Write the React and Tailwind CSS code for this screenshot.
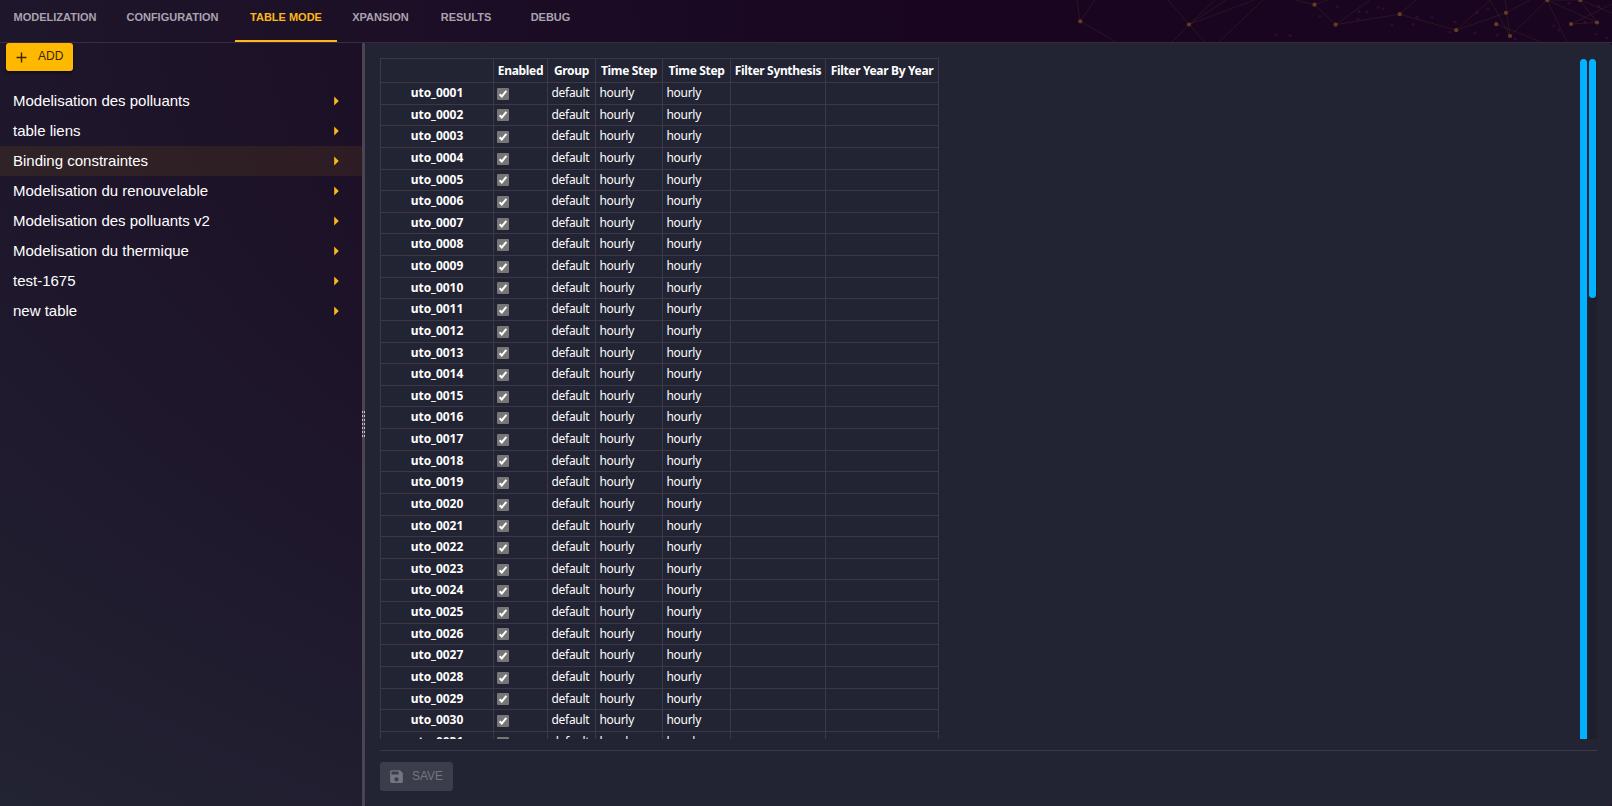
import React from "react";
import { MdAdd, MdArrowRight, MdSave } from "react-icons/md";

const tabs = [
  { label: "Modelization", width: "w-[110px]" },
  { label: "Configuration", width: "w-[125px]" },
  { label: "Table Mode", width: "w-[102px]", active: true },
  { label: "Xpansion", width: "w-[87px]" },
  { label: "Results", width: "w-[84px]" },
  { label: "Debug", width: "w-[85px]" },
];

const tables = [
  "Modelisation des polluants",
  "table liens",
  "Binding constraintes",
  "Modelisation du renouvelable",
  "Modelisation des polluants v2",
  "Modelisation du thermique",
  "test-1675",
  "new table",
];

const columns = ["", "Enabled", "Group", "Time Step", "Time Step", "Filter Synthesis", "Filter Year By Year"];

const rows = Array.from({ length: 31 }, (_, i) => ({
  name: `uto_${String(i + 1).padStart(4, "0")}`,
  group: "default",
  timeStep: "hourly",
}));

const dots = [
  [1080.3, 21.3], [1189, 24.5], [1314.5, 4.7], [1335.6, 24.6], [1399.7, 14.2],
  [1456.2, 30.2], [1496.3, 24.2], [1506, 12.8], [1510, 36], [1547.3, 0.2],
  [1580.3, 0.2], [1571, 24], [1597, 22.5],
];

const links = [
  "M1077 0L1080 21L1116 42", "M1080 21L1095 0", "M1168 0L1189 24.5L1205 42",
  "M1215 0L1189 24.5", "M1226 0L1189 24.5", "M1254 0L1189 24.5L1172 42", "M1263 0L1219 42",
  "M1295 0L1314.5 4.7L1335.6 24.6L1399.7 14.2L1416 0", "M1314.5 4.7L1328 0", "M1335.6 24.6L1370 0",
  "M1399.7 14.2L1456 30.2L1506 12.8L1530 0", "M1456 30.2L1490 0",
  "M1490 0L1510 36L1547 0L1580 0", "M1505 0L1510 36", "M1496.3 24L1541 42",
  "M1547 0L1567 42", "M1571 24L1597 22.5L1547 0", "M1571 24L1612 4", "M1580 0L1612 13", "M1597 22.5L1580 0",
];

const dust = [
  [1276, 35], [1290, 35.5], [1320, 16.5], [1337, 6.5], [1359, 11.5], [1358, 19], [1367, 12],
  [1378, 7.5], [1383, 9], [1417, 17], [1392, 25], [1413, 24], [1432, 17], [1455, 22],
  [1450, 32], [1477, 12.5], [1488, 9], [1497, 35], [1515, 39], [1475, 33], [1554, 26], [1559, 30],
  [1569, 3], [1585, 22], [1596, 34], [1599, 6.5], [1607, 38],
];

const Constellation = () => (
  <svg className="absolute right-0 top-0" width="562" height="42" viewBox="1050 0 562 42">
    {dust.map(([x, y]) => (
      <circle key={`${x}-${y}`} cx={x} cy={y} r="1.6" fill="#4a0a52" opacity="0.55" />
    ))}
    <path d={links.join("")} fill="none" stroke="#8a5a2a" strokeWidth="0.8" opacity="0.22" />
    {dots.map(([x, y]) => (
      <circle key={`${x}-${y}`} cx={x} cy={y} r="2.1" fill="#633e22" />
    ))}
  </svg>
);

const Header = () => (
  <header className="relative h-[43px] shrink-0 border-b border-[#382b40]">
    <Constellation />
    <nav className="flex h-full">
      {tabs.map((tab) => (
        <button
          key={tab.label}
          className={`${tab.width} h-[42px] shrink-0 border-b-2 pb-1.5 text-center text-[11px] font-bold uppercase ${
            tab.active ? "border-[#fdb818] text-[#fdb818]" : "border-transparent text-[#aaa3af]"
          }`}
        >
          {tab.label}
        </button>
      ))}
    </nav>
  </header>
);

const Sidebar = () => (
  <aside className="w-[362px] shrink-0">
    <button className="ml-1.5 flex h-7 w-[67px] items-center rounded-[3px] bg-[#ffb800] pl-[7px] text-[12px] text-[#38290a] shadow-[0_2px_3px_rgba(0,0,0,0.45)]">
      <MdAdd className="mt-px size-[17px]" />
      <span className="-mt-0.5 ml-2">ADD</span>
    </button>
    <ul className="mt-[15px] text-[15px] text-white">
      {tables.map((name) => (
        <li
          key={name}
          className={`flex h-[30px] items-center justify-between pl-[13px] pr-[15px] ${
            name === "Binding constraintes" ? "bg-[#ffb800]/8" : ""
          }`}
        >
          {name}
          <MdArrowRight className="size-[22px] text-[#fdb818]" />
        </li>
      ))}
    </ul>
  </aside>
);

const Splitter = () => (
  <div className="flex w-[3px] shrink-0 items-center bg-[#4a4453]">
    <div className="flex h-7 w-[3px] justify-between *:w-px *:bg-[repeating-linear-gradient(to_bottom,#c5c2c9_0_2px,#4a4453_2px_4px)]">
      <span />
      <span />
    </div>
  </div>
);

const Check = () => (
  <span className="flex size-3 items-center justify-center rounded-[1px] bg-[#767676]">
    <svg width="12" height="12" viewBox="0 0 12 12">
      <path d="M2.6 6.3L4.8 8.5L9.4 2.8" fill="none" stroke="#fff" strokeWidth="2" />
    </svg>
  </span>
);

const Grid = () => (
  <div className="w-[559px] border-l border-t border-[#393947] font-['Noto_Sans','Open_Sans',sans-serif] text-[12px] text-white *:grid *:grid-cols-[113px_54px_48px_67px_68px_95px_113px]">
    <div className="h-6 text-center font-bold leading-[23px] tracking-[-0.33px] *:border-b *:border-r *:border-[#393947]">
      {columns.map((column, i) => (
        <div key={i} className="whitespace-nowrap">{column}</div>
      ))}
    </div>
    {rows.map((row) => (
      <div
        key={row.name}
        className="h-[21.63px] leading-5 tracking-[-0.3px] *:border-b *:border-r *:border-[#393947]"
      >
        <div className="text-center font-bold tracking-[-0.05px]">{row.name}</div>
        <div className="flex items-center pl-[3px] pt-px">
          <Check />
        </div>
        <div className="pl-[3.5px]">{row.group}</div>
        <div className="pl-[3.5px]">{row.timeStep}</div>
        <div className="pl-[3.5px]">{row.timeStep}</div>
        <div />
        <div />
      </div>
    ))}
  </div>
);

const Content = () => (
  <main className="flex min-w-0 flex-1 flex-col rounded-[3px] bg-[#222333] px-[15px] pt-[15px]">
    <div className="flex h-[681px] justify-between overflow-hidden">
      <Grid />
      <div className="flex gap-0.5 pt-px">
        <div className="w-[7px] rounded-t-full bg-[#00b2ff]" />
        <div className="w-2 bg-[#1e1f2d]">
          <div className="h-[239px] w-[7px] rounded-full bg-[#00b2ff]" />
        </div>
      </div>
    </div>
    <div className="mt-[11px] border-t border-[#393947] pt-[11px]">
      <button className="flex h-[29px] w-[73px] items-center rounded-[3px] bg-[#3c3d4a] pl-2 text-[12px] text-[#757581]">
        <MdSave className="size-[17px]" />
        <span className="-mt-0.5 ml-[7px]">SAVE</span>
      </button>
    </div>
  </main>
);

export default function App() {
  return (
    <div className="flex h-[806px] w-[1612px] flex-col overflow-hidden bg-[radial-gradient(ellipse_at_top_right,#190520_0%,#190520_30%,#222333_100%)] font-['Liberation_Sans',Arial,sans-serif]">
      <Header />
      <div className="flex min-h-0 flex-1">
        <Sidebar />
        <Splitter />
        <Content />
      </div>
    </div>
  );
}
